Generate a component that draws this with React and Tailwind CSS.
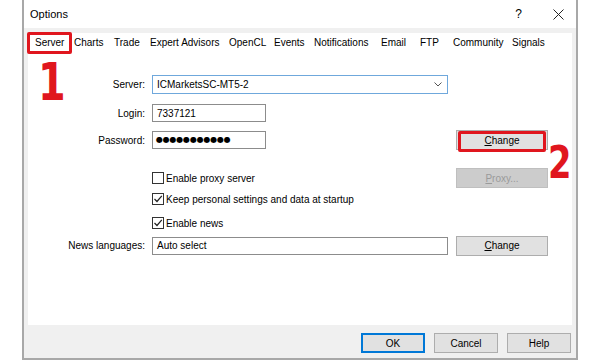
import React from "react";

function Check({ checked }) {
  return (
    <div className="w-[12px] h-[12px] border border-[#333] bg-white flex items-center justify-center shrink-0">
      {checked && (
        <svg width="10" height="10" viewBox="0 0 10 10">
          <polyline points="1.5,5 4,7.5 8.8,1.8" fill="none" stroke="#222" strokeWidth="1.2" />
        </svg>
      )}
    </div>
  );
}

function Btn({ children, disabled, className = "" }) {
  return (
    <div
      className={
        "h-[20px] w-[92px] flex items-center justify-center border " +
        (disabled ? "bg-[#cccccc] border-[#bfbfbf] text-[#9a9a9a]" : "bg-[#e1e1e1] border-[#adadad] text-black") +
        " " +
        className
      }
    >
      {children}
    </div>
  );
}

const tabs = [
  ["Server", 39],
  ["Charts", 40],
  ["Trade", 36],
  ["Expert Advisors", 79],
  ["OpenCL", 45],
  ["Events", 40],
  ["Notifications", 67],
  ["Email", 39],
  ["FTP", 33],
  ["Community", 59],
  ["Signals", 35],
];

export default function App() {
  return (
    <div className="w-[600px] h-[360px] bg-white relative overflow-hidden text-[10px] text-black font-['Liberation_Sans',Arial,sans-serif]">
      <div className="ml-[22px] w-[556px] h-[360px] border-x-2 border-b-2 border-[#a8a8a8] bg-[#f0f0f0] flex flex-col">
        {/* title bar */}
        <div className="h-[28px] bg-white flex items-center pl-[6px] pr-[12px] shrink-0">
          <span className="text-[11px]">Options</span>
          <div className="flex-1" />
          <span className="text-[12px] mr-[31px]">?</span>
          <svg width="11" height="11" viewBox="0 0 11 11">
            <path d="M0.5 0.5 L10.5 10.5 M10.5 0.5 L0.5 10.5" stroke="#222" strokeWidth="1" />
          </svg>
        </div>

        {/* white panel */}
        <div className="mx-[4px] mt-[5px] h-[292px] bg-white shrink-0 flex flex-col">
          {/* tabs */}
          <div className="flex pl-[7px] pt-[2px]">
            {tabs.map(([t, w]) => (
              <div key={t} style={{ width: w }} className="shrink-0">
                <span
                  className={
                    "inline-block leading-[12px] pb-[2px] " +
                    (t === "Server" ? "border-b-2 border-[#0078d7]" : "border-b-2 border-transparent")
                  }
                >
                  {t}
                </span>
              </div>
            ))}
          </div>

          {/* form */}
          <div className="flex flex-col mt-[22px]">
            {/* Server */}
            <div className="flex items-center h-[19px]">
              <div className="w-[117px] text-right">Server:</div>
              <div className="ml-[7px] w-[296px] h-[19px] border border-[#6fa8dc] flex items-center pl-[4px] pr-[5px]">
                <span className="flex-1">ICMarketsSC-MT5-2</span>
                <svg width="8" height="5" viewBox="0 0 8 5">
                  <polyline points="0.5,0.5 4,4 7.5,0.5" fill="none" stroke="#555" strokeWidth="1" />
                </svg>
              </div>
            </div>
            {/* Login */}
            <div className="flex items-center h-[18px] mt-[10px]">
              <div className="w-[117px] text-right">Login:</div>
              <div className="ml-[7px] w-[114px] h-[18px] border border-[#8c8c8c] flex items-center pl-[4px]">7337121</div>
            </div>
            {/* Password */}
            <div className="flex items-center h-[20px] mt-[8px]">
              <div className="w-[117px] text-right">Password:</div>
              <div className="ml-[7px] w-[296px]">
                <div className="w-[114px] h-[18px] border border-[#8c8c8c] flex items-center pl-[3px] text-[8px] tracking-[-0.2px] font-['DejaVu_Sans',sans-serif]">
                  ●●●●●●●●●●●
                </div>
              </div>
              <Btn className="ml-[8px]">
                <span><span className="underline">C</span>hange</span>
              </Btn>
            </div>
            {/* Proxy */}
            <div className="flex items-center h-[20px] mt-[18px]">
              <div className="w-[117px]" />
              <div className="ml-[7px] w-[296px] flex items-center gap-[2px]">
                <Check />
                <span>Enable proxy server</span>
              </div>
              <Btn disabled className="ml-[8px]">
                <span><span className="underline">P</span>roxy...</span>
              </Btn>
            </div>
            {/* Keep */}
            <div className="flex items-center h-[16px] mt-[3px]">
              <div className="w-[117px]" />
              <div className="ml-[7px] flex items-center gap-[2px]">
                <Check checked />
                <span>Keep personal settings and data at startup</span>
              </div>
            </div>
            {/* News */}
            <div className="flex items-center h-[16px] mt-[8px]">
              <div className="w-[117px]" />
              <div className="ml-[7px] flex items-center gap-[2px]">
                <Check checked />
                <span>Enable news</span>
              </div>
            </div>
            {/* News languages */}
            <div className="flex items-center h-[19px] mt-[5px]">
              <div className="w-[117px] text-right">News languages:</div>
              <div className="ml-[7px] w-[296px] h-[18px] border border-[#8c8c8c] flex items-center pl-[4px]">Auto select</div>
              <Btn className="ml-[8px] h-[19px]">
                <span><span className="underline">C</span>hange</span>
              </Btn>
            </div>
          </div>
        </div>

        {/* bottom buttons */}
        <div className="flex justify-end gap-[9px] pr-[5px] mt-[8px]">
          <div className="w-[64px] h-[20px] flex items-center justify-center bg-[#e1e1e1] border-2 border-[#0078d7]">OK</div>
          <div className="w-[64px] h-[20px] flex items-center justify-center bg-[#e1e1e1] border border-[#adadad]">Cancel</div>
          <div className="w-[64px] h-[20px] flex items-center justify-center bg-[#e1e1e1] border border-[#adadad]">Help</div>
        </div>
      </div>

      {/* annotations */}
      <div className="absolute left-[27px] top-[32px] w-[45px] h-[22px] border-[3px] border-[#e0161e] rounded-[2px]" />
      <div className="absolute left-[458px] top-[131px] w-[88px] h-[21px] border-[3px] border-[#e0161e] rounded-[2px]" />
      <div className="absolute left-[38px] top-[57px] text-[51px] leading-none font-bold text-[#e0161e] font-['DejaVu_Sans',sans-serif] scale-x-[0.78] origin-left">1</div>
      <div className="absolute left-[548px] top-[140px] text-[45px] leading-none font-bold text-[#e0161e] font-['DejaVu_Sans',sans-serif] scale-x-[0.75] origin-left">2</div>
    </div>
  );
}
